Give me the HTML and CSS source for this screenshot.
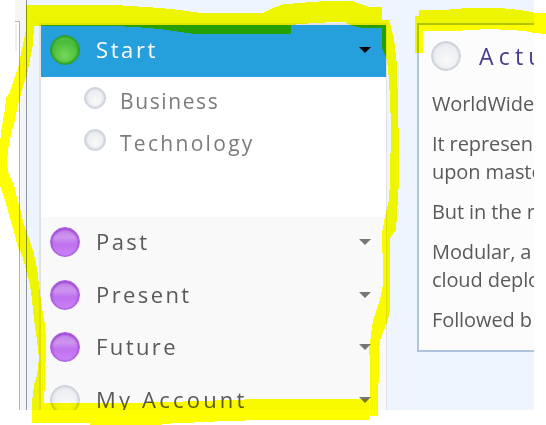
FILE: index.html
```html
<!DOCTYPE html>
<html lang="en">
<head>
  <meta charset="utf-8">
  <title>Start</title>
  <link rel="stylesheet" href="styles.css">
</head>
<body>
  <div class="page">
    <div class="app">
      <div class="gutter">
        <div class="gutter-top"></div>
        <div class="gutter-body"></div>
      </div>
      <nav class="menu">
        <div class="menu-item active"><span class="ball green"></span><span class="label start">Start</span><span class="caret"></span></div>
        <ul class="submenu">
          <li><span class="ball small"></span><span class="business">Business</span></li>
          <li><span class="ball small"></span><span class="technology">Technology</span></li>
        </ul>
        <div class="menu-item"><span class="ball purple"></span><span class="label">Past</span><span class="caret"></span></div>
        <div class="menu-item"><span class="ball purple"></span><span class="label">Present</span><span class="caret"></span></div>
        <div class="menu-item"><span class="ball purple"></span><span class="label">Future</span><span class="caret"></span></div>
        <div class="menu-item"><span class="ball"></span><span class="label account">My Account</span><span class="caret"></span></div>
      </nav>
      <article class="card">
        <h2><span class="ball"></span><span>Actu</span></h2>
        <p>WorldWide</p>
        <p>It represen<br>upon maste</p>
        <p>But in the r</p>
        <p>Modular, a<br>cloud deplo</p>
        <p>Followed b</p>
      </article>
    </div>

    <!-- highlighter strokes -->
    <svg class="marker" width="546" height="425" viewBox="0 0 546 425" shape-rendering="crispEdges">
      <path fill-rule="evenodd" d="M26 5H115L130 6L160 8L180 10L200 13H263L275 7L285 4L300 3L325 1H353L360 4L370 7H382V20H389L394 38L397 65L398 110L399 144V180L397 215L396 230L391 237L390 240V310L388 320L380 340L379 350L378 416H370V399H369V420H268L222 421L207 422L181 423L161 424V425H90V423H32V402L34 385L37 375L39 358L37 340L34 320L32 300L30 285L26 270L22 255L18 248L14 232L9 215L5 200L0 185V145L1 132L3 120L5 110L6 98L10 92L14 80L19 65L20 58L24 40L26 30Z
        M34 26L33 45L30 60L27 75L25 80L18 105L15 120L11 135L8 150L7 165L9 175L14 185L17 198L20 208L24 225L28 235L33 250L37 268L39 285L42 308L45 325L46 340L45 385L44 398V403H130L200 401L230 400L261 399H370V360L369 350L371 335L373 320L380 300L383 285V265L382 240V233L384 222L386 212L389 200L390 180L391 126L390 100L389 80L387 60L382 48V28H362L350 25L345 22H333L300 24L291 25V34H195L180 32L160 29L135 27L115 26Z"/>
      <path d="M415 16H419V10H445L452 9L469 8H500L520 10L532 12L534 13H546V34L534 33L525 31L510 30L490 29L470 30L455 31H423V53H415Z"/>
    </svg>
  </div>
</body>
</html>
```

FILE: styles.css
```css
body {
  margin: 0;
  background-color: #fff;
  font-family: "Open Sans", "Noto Sans", sans-serif;
  color: #5a5a5a;
}

.page {
  position: relative;
  width: 546px;
  height: 425px;
  overflow: hidden;
}

.app {
  display: flex;
  align-items: flex-start;
  width: 534px;
  height: 410px;
  overflow: hidden;
  background-color: #eef5fe;
}

.gutter {
  display: flex;
  flex-direction: column;
  flex: none;
  box-sizing: border-box;
  width: 27px;
  height: 410px;
  border-right: 1px solid #8f94a3;
  background: linear-gradient(to right, #fff 15px, #f6f5f6 15px);
}

.gutter-top {
  height: 21px;
}

.gutter-body {
  flex: 1;
  width: 19px;
  border-right: 1px solid #b4b4b4;
  background: linear-gradient(#b4b4b4, #b4b4b4) 15px 0 / 5px 1px no-repeat,
    linear-gradient(#eee, #eee) 15px 3px / 2px 27px no-repeat,
    #fff;
}

.menu {
  flex: none;
  width: 345px;
  margin: 23px 0 0 12px;
  border: solid #e2e2e5;
  border-width: 2px 1px 0 2px;
  background-color: #f9f9f9;
}

.menu-item {
  display: flex;
  align-items: center;
  box-sizing: border-box;
  height: 52.7px;
  padding: 0 15px 2.6px 9px;
  font-size: 22px;
  letter-spacing: 2.4px;
}

.menu-item.active {
  height: 52px;
  padding-bottom: 2px;
  background-color: #25a0dc;
  color: #fff;
}

.label {
  flex: 1;
  margin-left: 16px;
  padding-bottom: 2px;
}

.label.start {
  letter-spacing: 2.6px;
}

.label.account {
  letter-spacing: 3.2px;
}

.caret {
  border: solid transparent;
  border-width: 6px 6px 0;
  border-top-color: #777;
}

.active .caret {
  border-top-color: #000;
}

.submenu {
  height: 140px;
  margin: 0;
  padding: 0 0 0 43px;
  box-sizing: border-box;
  background-color: #fff;
  list-style: none;
  font-size: 21px;
  letter-spacing: 1.6px;
  color: #7b7b7b;
}

.submenu li {
  display: flex;
  align-items: flex-start;
  gap: 14px;
  height: 42px;
  line-height: 28px;
  padding-top: 10px;
  box-sizing: border-box;
}

.technology {
  letter-spacing: 2.3px;
}

.ball {
  flex: none;
  box-sizing: border-box;
  width: 30px;
  height: 30px;
  border: 1px solid #c9d0da;
  border-radius: 50%;
  background: radial-gradient(circle at 55% 65%, #f9f9fa, #e8eaee 75%);
  box-shadow: inset 0 0 2px 1px #c6ccd7;
}

.ball.small {
  width: 22px;
  height: 22px;
}

.ball.green {
  border-color: #2b9b35;
  background: radial-gradient(circle at 50% 70%, #75d75a, #4abb3a 60%, #65c55b 90%);
  box-shadow: inset 0 0 2px 1px #229a17;
}

.ball.purple {
  border-color: #ad60dc;
  background: linear-gradient(#c280e6, #cd94ef 35%, #bf70ef 58%, #cb85f6);
  box-shadow: inset 0 1px 2px 1px #a148d6;
}

.card {
  flex: none;
  box-sizing: border-box;
  width: 240px;
  height: 329px;
  margin: 23px 0 0 30px;
  padding: 16px 13px 0;
  border: 2px solid #b0c4de;
  background-color: #fcfcfc;
  font-size: 20px;
  line-height: 28px;
  white-space: nowrap;
}

.card h2 {
  display: flex;
  align-items: center;
  gap: 18px;
  height: 30px;
  margin: 0 0 19px -1px;
  font-size: 23px;
  font-weight: normal;
  letter-spacing: 5.2px;
  color: #483d8b;
}

.card p {
  margin: 0 0 12px;
  letter-spacing: -0.1px;
}

.marker {
  position: absolute;
  top: 0;
  left: 0;
  fill: #ff0;
  mix-blend-mode: multiply;
}
```
